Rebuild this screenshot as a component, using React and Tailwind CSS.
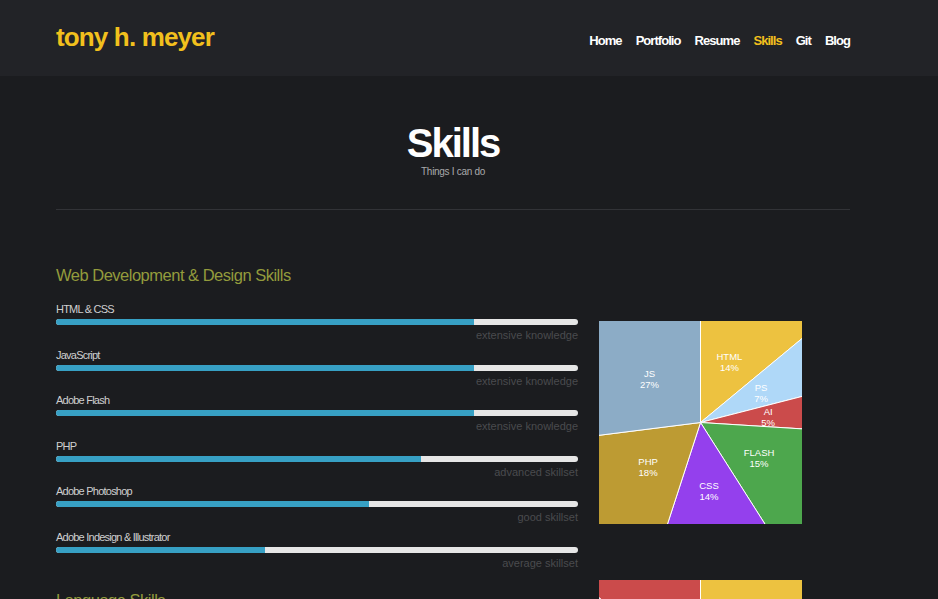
import React from "react";

const NAV = ["Home", "Portfolio", "Resume", "Skills", "Git", "Blog"];

const WEB_SKILLS = [
  { name: "HTML & CSS", pct: 80, level: "extensive knowledge" },
  { name: "JavaScript", pct: 80, level: "extensive knowledge" },
  { name: "Adobe Flash", pct: 80, level: "extensive knowledge" },
  { name: "PHP", pct: 70, level: "advanced skillset" },
  { name: "Adobe Photoshop", pct: 60, level: "good skillset" },
  { name: "Adobe Indesign & Illustrator", pct: 40, level: "average skillset" },
];

const WEB_PIE = [
  { label: "HTML", value: 14, color: "#edc240" },
  { label: "PS", value: 7, color: "#afd8f8" },
  { label: "AI", value: 5, color: "#cb4b4b" },
  { label: "FLASH", value: 15, color: "#4da74d" },
  { label: "CSS", value: 14, color: "#9440ed" },
  { label: "PHP", value: 18, color: "#bd9b33" },
  { label: "JS", value: 27, color: "#8cacc6" },
];

const LANG_PIE = [
  { label: "EN", value: 40, color: "#edc240" },
  { label: "DE", value: 20, color: "#4da74d" },
  { label: "FR", value: 16, color: "#9440ed" },
  { label: "ES", value: 10, color: "#afd8f8" },
  { label: "JP", value: 14, color: "#cb4b4b" },
];

const PieChart = ({ data, size = 203 }) => {
  const c = size / 2;
  const R = 220;
  const total = data.reduce((s, d) => s + d.value, 0);
  let start = -Math.PI / 2;
  const slices = data.map((d) => {
    const sweep = (d.value / total) * Math.PI * 2;
    const a0 = start;
    const a1 = start + sweep;
    start = a1;
    const x0 = c + R * Math.cos(a0);
    const y0 = c + R * Math.sin(a0);
    const x1 = c + R * Math.cos(a1);
    const y1 = c + R * Math.sin(a1);
    const large = sweep > Math.PI ? 1 : 0;
    const mid = (a0 + a1) / 2;
    return {
      ...d,
      path: `M${c},${c} L${x0},${y0} A${R},${R} 0 ${large} 1 ${x1},${y1} Z`,
      lx: c + 68 * Math.cos(mid),
      ly: c + 68 * Math.sin(mid),
    };
  });
  return (
    <svg width={size} height={size} viewBox={`0 0 ${size} ${size}`} className="block overflow-hidden">
      {slices.map((s) => (
        <path key={s.label} d={s.path} fill={s.color} stroke="#ffffff" strokeWidth="1" />
      ))}
      {slices.map((s) => (
        <text
          key={s.label + "t"}
          x={s.lx}
          y={s.ly}
          textAnchor="middle"
          fill="#ffffff"
          fontSize="9.5"
          fontFamily="'Liberation Sans', Arial, sans-serif"
        >
          <tspan x={s.lx} dy="-1">{s.label}</tspan>
          <tspan x={s.lx} dy="11">{s.value}%</tspan>
        </text>
      ))}
    </svg>
  );
};

const SkillRow = ({ skill }) => (
  <div className="h-[45.5px]">
    <div className="text-[11px] leading-[14px] text-[#cfcfcf] tracking-[-0.07em]">{skill.name}</div>
    <div className="mt-[3px] h-[6px] rounded-full bg-[#e6e6e6] overflow-hidden flex">
      <div className="h-full bg-[#37a0c4]" style={{ width: `${skill.pct}%` }} />
    </div>
    <div className="mt-[3px] text-right text-[11px] leading-[14px] text-[#4a4b4e]">{skill.level}</div>
  </div>
);

export default function App() {
  return (
    <div
      className="min-h-[599px] bg-[#1b1c1f] overflow-hidden"
      style={{ fontFamily: "'Liberation Sans', Arial, sans-serif" }}
    >
      <header className="h-[76px] bg-[#222327]">
        <div className="ml-[56px] w-[794px] h-full flex items-center justify-between">
          <div className="mb-[3px] text-[26px] leading-[30px] font-bold text-[#f2c01d] tracking-[-0.85px]">
            tony h. meyer
          </div>
          <nav className="mt-[6px] flex gap-[14px] text-[13px] leading-[16px] font-bold tracking-[-0.95px]">
            {NAV.map((n) => (
              <span key={n} className={n === "Skills" ? "text-[#f2c01d]" : "text-white"}>
                {n}
              </span>
            ))}
          </nav>
        </div>
      </header>

      <main className="ml-[56px] w-[794px]">
        <div className="pt-[45px] text-center">
          <h1 className="text-[40px] leading-[44px] font-bold text-white tracking-[-2px]">Skills</h1>
          <div className="mt-[1px] text-[10px] leading-[12px] text-[#a9a9ab] tracking-[-0.03em]">Things I can do</div>
        </div>
        <div className="mt-[31px] border-t border-[#323337]" />

        <section className="mt-[55px] flex gap-[21px]">
          <div className="w-[522px]">
            <h2 className="text-[16.5px] leading-[20px] text-[#939b3c] tracking-[-0.03em] mb-[17px]">
              Web Development &amp; Design Skills
            </h2>
            {WEB_SKILLS.map((s) => (
              <SkillRow key={s.name} skill={s} />
            ))}
          </div>
          <div className="mt-[56px]">
            <PieChart data={WEB_PIE} />
          </div>
        </section>

        <section className="mt-[5px] flex gap-[21px]">
          <div className="w-[522px] pt-[10px]">
            <h2 className="text-[16.5px] leading-[20px] text-[#939b3c] tracking-[-0.03em]">Language Skills</h2>
          </div>
          <div>
            <PieChart data={LANG_PIE} />
          </div>
        </section>
      </main>
    </div>
  );
}
